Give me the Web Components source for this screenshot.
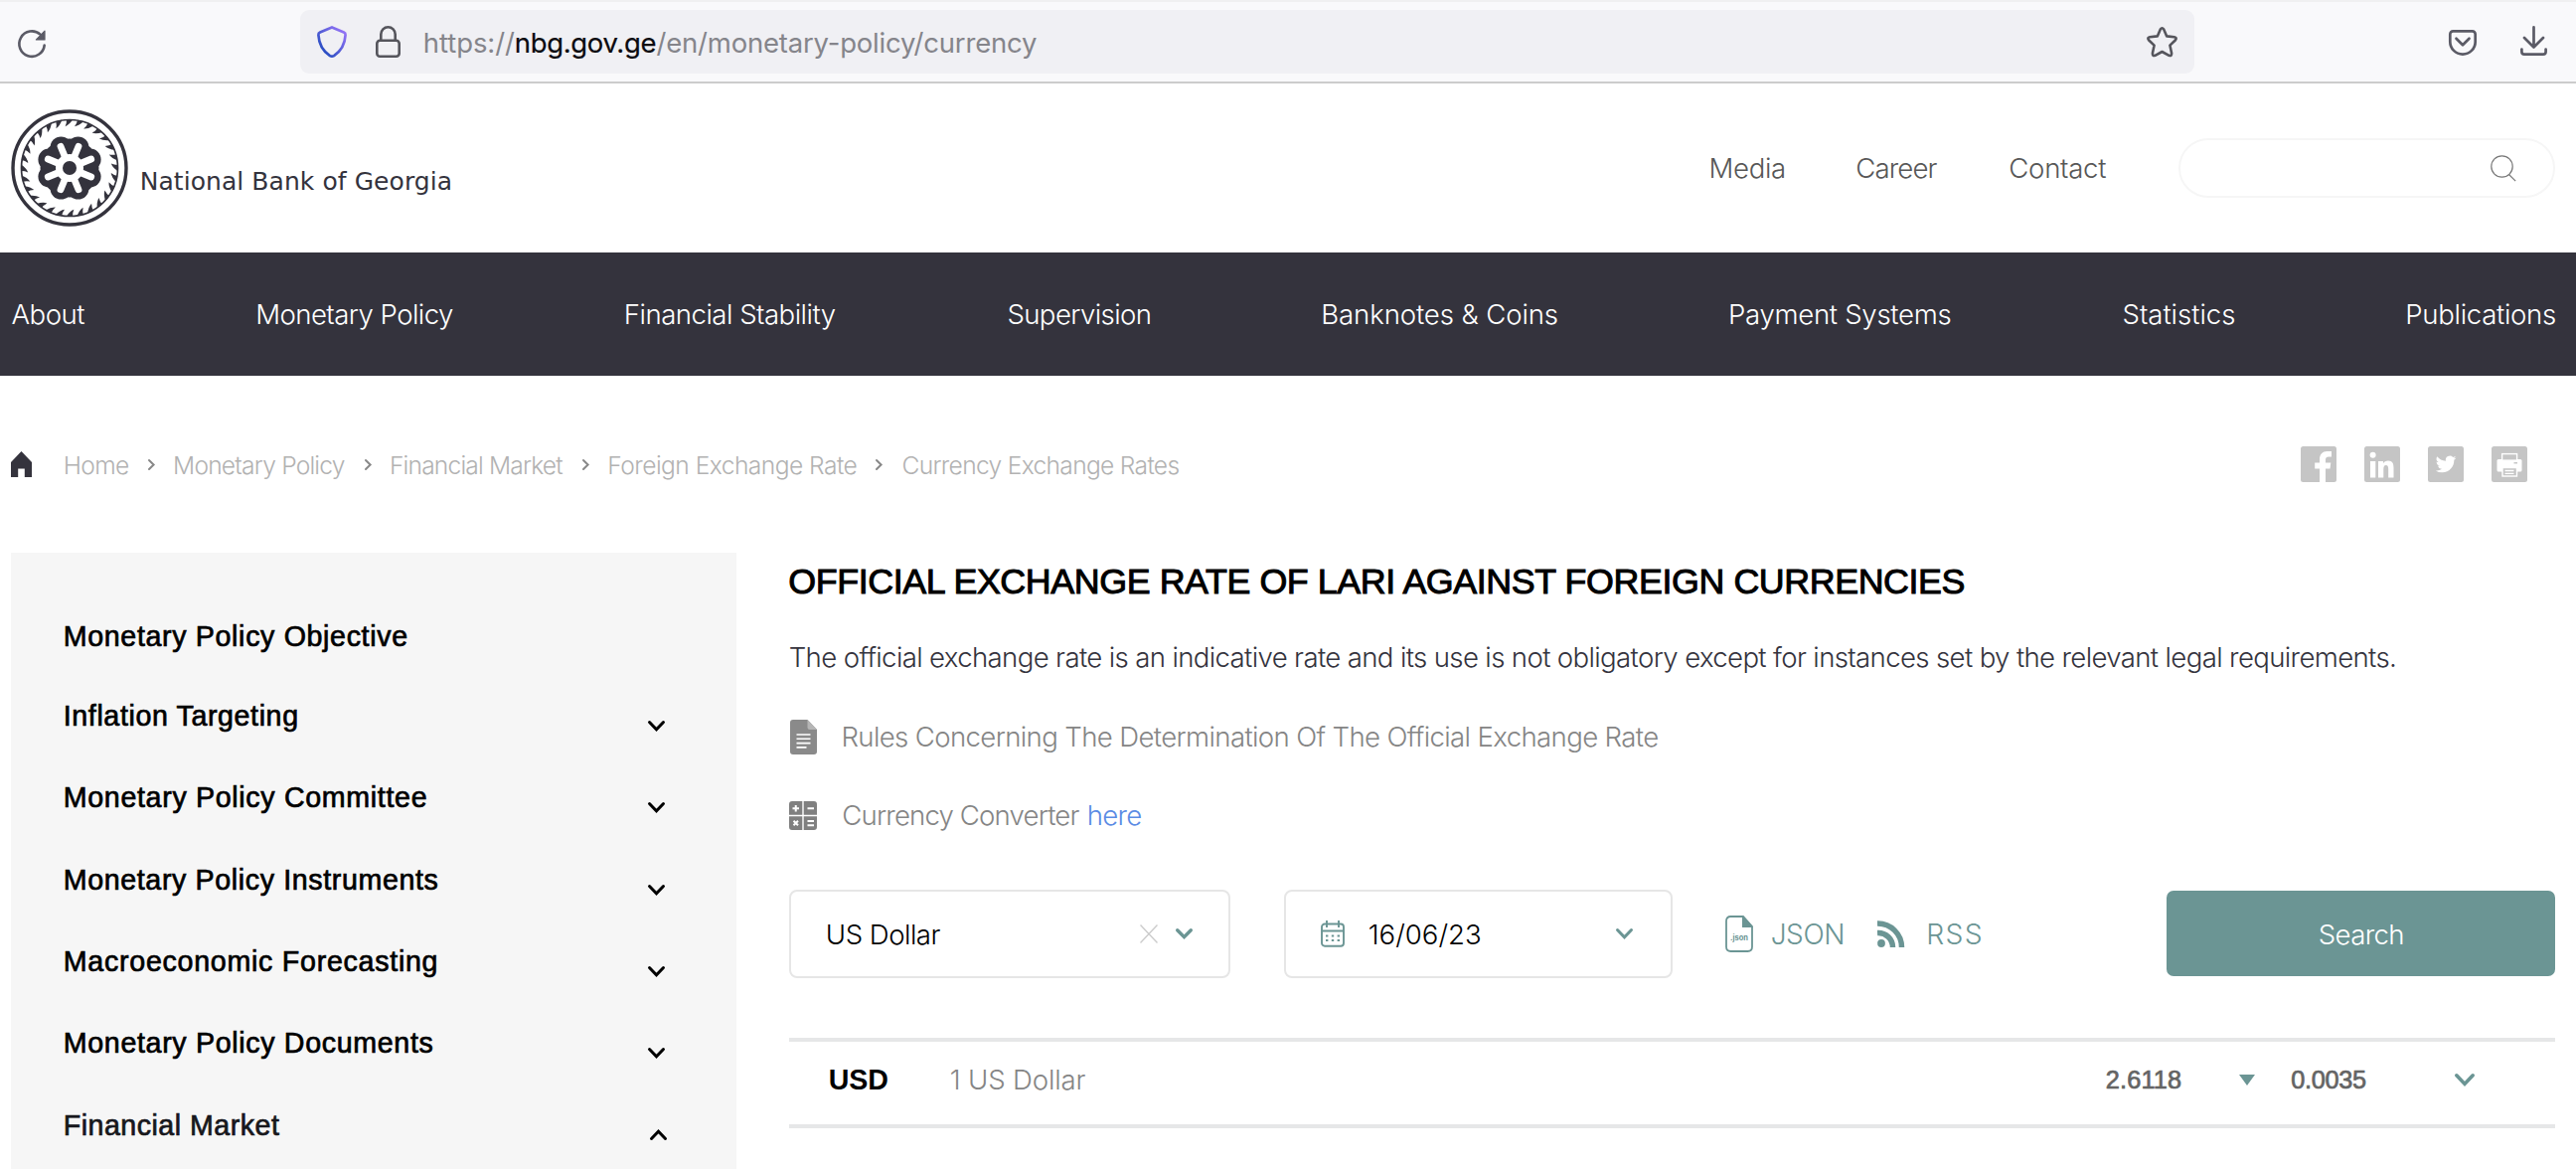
<!DOCTYPE html>
<html lang="en">
<head>
<meta charset="utf-8">
<title>National Bank of Georgia</title>
<style>
html,body{margin:0;padding:0;width:2592px;height:1176px;overflow:hidden;background:#fff;font-family:Inter,"Liberation Sans",sans-serif}
</style>
</head>
<body>
<nbg-page></nbg-page>
<script>
const make = (name, html, setup) => {
  const t = document.createElement('template');
  t.innerHTML = html;
  customElements.define(name, class extends HTMLElement {
    connectedCallback() {
      if (this.shadowRoot) return;
      this.attachShadow({ mode: 'open' }).appendChild(t.content.cloneNode(true));
      if (setup) setup(this, this.shadowRoot);
    }
  });
};

/* One line of text whose tracking is set so that its ink spans w pixels. */
make('fit-text', `<style>
:host{display:block;flex:none;white-space:pre;line-height:40px;font-weight:300;font-size:27.6px}
:host([medium]){font-family:"Liberation Sans",sans-serif;font-weight:400;font-size:28.6px;-webkit-text-stroke:.7px currentColor}
:host([heavy]){font-family:"Liberation Sans",sans-serif;font-weight:700;font-size:28.6px}
span{display:inline-block;white-space:pre}
</style><span><slot></slot></span>`, (el, root) => {
  const w = +el.getAttribute('w');
  if (el.hasAttribute('size')) el.style.fontSize = el.getAttribute('size') + 'px';
  if (el.hasAttribute('weight')) el.style.fontWeight = el.getAttribute('weight');
  if (el.hasAttribute('color')) el.style.color = el.getAttribute('color');
  const cs = getComputedStyle(el), text = el.textContent;
  const ctx = document.createElement('canvas').getContext('2d');
  const k = 16; /* measured enlarged, as glyph bounds are rounded to whole pixels */
  ctx.font = `${cs.fontWeight} ${parseFloat(cs.fontSize) * k}px ${cs.fontFamily}`;
  const m = ctx.measureText(text);
  const ink = (m.actualBoundingBoxRight + m.actualBoundingBoxLeft) / k;
  el.style.width = w + 'px';
  el.style.letterSpacing = (w - 1 - ink) / (text.length - 1) + 'px';
  root.querySelector('span').style.marginLeft = m.actualBoundingBoxLeft / k + 1 + 'px';
});

/* Chevron: dir = down | up | right */
make('chev-icon', `<style>:host{display:block;flex:none}svg{display:block;overflow:visible}</style>
<svg fill="none" stroke="currentColor" stroke-linecap="round" stroke-linejoin="miter"><path/></svg>`, (el, root) => {
  const w = +el.getAttribute('w'), h = +el.getAttribute('h'), s = +(el.getAttribute('s') || 3), i = s / 2;
  const svg = root.querySelector('svg');
  svg.setAttribute('width', w); svg.setAttribute('height', h); svg.setAttribute('stroke-width', s);
  const d = { down: `M${i} ${i}L${w/2} ${h-i*1.4}L${w-i} ${i}`, up: `M${i} ${h-i}L${w/2} ${i*1.4}L${w-i} ${h-i}`, right: `M${i} ${i}L${w-i*1.4} ${h/2}L${i} ${h-i}` };
  root.querySelector('path').setAttribute('d', d[el.getAttribute('dir') || 'down']);
});

make('browser-bar', `<style>
:host{display:flex;box-sizing:border-box;height:84px;align-items:center;background:#f9f9fb;border-top:2px solid #f0f0f1;border-bottom:2px solid #ccc;padding:0 29px 0 18px;color:#5b5b66}
svg{display:block;flex:none;overflow:visible}
fit-text{padding-top:2px}
.url{display:flex;align-items:center;box-sizing:border-box;width:1906px;height:64px;margin-left:256px;border-radius:9px;background:#f0f0f4;padding:0 17px 0 17px}
.grow{flex:1}
</style>
<svg width="28" height="28" viewBox="0 0 28 28" fill="none" stroke="currentColor" stroke-width="2.6" style="margin-top:4px"><path d="M26.7 15.5A12.7 12.7 0 1 1 22.5 4.6" stroke-linecap="round"/><path d="M27 1.2V10h-8.6z" fill="currentColor" stroke-width="1.2" stroke-linejoin="round"/></svg>
<div class="url">
<svg width="30" height="32" viewBox="0 0 30 32" fill="none"><defs><linearGradient id="g" x1="0" y1="1" x2="1" y2="0"><stop offset=".2" stop-color="#2d4fc4"/><stop offset=".9" stop-color="#9273f5"/></linearGradient></defs><path d="M15 1.4L27 6.6c1.2.5 1.7 1.3 1.6 2.6C28 19 23.500 26 17 30.100c-1.500.8-2.500.8-4 0C6.500 26 2 19 1.400 9.200 1.300 7.900 1.800 7.100 3 6.600z" stroke="url(#g)" stroke-width="2.7" stroke-linejoin="round"/></svg>
<svg width="25" height="32" viewBox="0 0 25 32" fill="none" stroke="#55555c" stroke-width="2.6" style="margin-left:29px"><rect x="1.300" y="14.800" width="22.400" height="15.900" rx="3"/><path d="M5.300 14.800V8.500a7.200 7.200 0 0 1 14.400 0v6.300"/></svg>
<fit-text w="91" size="27.5" weight="400" color="#85858b" style="margin-left:23.500px">https://</fit-text>
<fit-text w="141" size="27.500" weight="400" color="#0c0b10" style="margin-left:1px;-webkit-text-stroke:.2px">nbg.gov.ge</fit-text>
<fit-text w="383" size="27.500" weight="400" color="#85858b" style="margin-left:.500px">/en/monetary-policy/currency</fit-text>
<div class="grow"></div>
<svg width="31" height="31" viewBox="0 0 31 31" fill="none" stroke="#55555c" stroke-width="2.600" stroke-linejoin="round"><path d="M13.800 2.500q1.700-2.600 3.400 0L20.200 9.400l7.600.8q3 .7 1.200 3L23.400 18.600l1.700 8q.2 3-2.600 2.200L15.500 25 8.500 28.800q-2.800.8-2.600-2.200l1.700-8L2 13.200q-1.800-2.300 1.200-3l7.600-.8z"/></svg>
</div>
<div class="grow"></div>
<svg width="28" height="26" viewBox="0 0 28 26" fill="none" stroke="currentColor" stroke-width="2.700" stroke-linecap="round" stroke-linejoin="round" style="margin-top:2px"><path d="M4.300 1.400h19.400a3 3 0 0 1 3 3v7.500a12.700 12.700 0 0 1-25.400 0V4.400a3 3 0 0 1 3-3z"/><path d="M7.500 8.800l6.500 6.500 6.500-6.500"/></svg>
<svg width="27" height="30" viewBox="0 0 27 30" fill="none" stroke="currentColor" stroke-width="2.700" stroke-linecap="round" stroke-linejoin="round" style="margin-left:44px;margin-top:-2px"><path d="M13.500 1.400v19M4 12l9.500 9.500L23 12M1.400 23.500V26q0 2.600 2.600 2.600h19q2.600 0 2.600-2.600v-2.500"/></svg>`);

make('nbg-seal', `<style>:host{display:block;flex:none}svg{display:block}</style>
<svg width="118" height="118" viewBox="-59 -59 118 118" fill="#34333d"><circle r="57" fill="none" stroke="#34333d" stroke-width="3.400"/><circle r="48.500" fill="none" stroke="#34333d" stroke-width="1.700"/><g id="teeth"></g><circle r="29.500"/><g id="lobes"></g><circle r="14" fill="#fff"/><g id="petals" stroke="#fff" stroke-width="6.800" stroke-linecap="round"></g><circle r="7"/></svg>`, (el, root) => {
  const p = (r, a) => { a *= Math.PI / 180; return (r * Math.cos(a)).toFixed(2) + ' ' + (r * Math.sin(a)).toFixed(2); };
  let t = '', l = '', s = '';
  for (let i = 0; i < 28; i++) { const a = i * 360 / 28; t += `<path d="M${p(49, a - 3.500)}Q${p(45.500, a - 3.500)} ${p(42, a - 6)}Q${p(43.500, a)} ${p(49, a + 4)}z"/>`; }
  for (let i = 0; i < 8; i++) {
    const a = 22.5 + i * 45, c = p(22.5, a).split(' '), e = p(23.5, a).split(' ');
    l += `<circle cx="${c[0]}" cy="${c[1]}" r="10.800"/>`;
    s += `<path d="M0 0L${e[0]} ${e[1]}"/>`;
  }
  root.querySelector('#teeth').innerHTML = t;
  root.querySelector('#lobes').innerHTML = l;
  root.querySelector('#petals').innerHTML = s;
});

make('site-header', `<style>
:host{display:flex;height:170px;align-items:center;padding:0 21px 0 11px;box-sizing:border-box;color:#575757}
.name{font-family:"DejaVu Sans",sans-serif;font-weight:400;margin:27px 0 0 13px}
.sp{flex:1}
nav{display:flex;gap:73px;margin-right:73px}
.box{display:flex;align-items:center;justify-content:flex-end;box-sizing:border-box;width:379px;height:60px;border:2px solid #f6f6f6;border-radius:30px;padding-right:37px}
</style>
<nbg-seal></nbg-seal><fit-text class="name" w="311" size="25" weight="400" color="#34333d">National Bank of Georgia</fit-text>
<div class="sp"></div>
<nav><fit-text w="74">Media</fit-text><fit-text w="81">Career</fit-text><fit-text w="97">Contact</fit-text></nav>
<div class="box"><svg width="26" height="27" viewBox="0 0 26 27" fill="none" stroke="#777" stroke-width="1.200"><circle cx="11.500" cy="11.500" r="10.700"/><path d="M18.500 19.500l6.700 6.700"/></svg></div>`);

make('main-nav', `<style>:host{display:flex;justify-content:space-between;align-items:center;box-sizing:border-box;height:124px;padding:0 21px 0 11px;background:#34333d;color:#fff}</style>
<fit-text w="74">About</fit-text><fit-text w="197">Monetary Policy</fit-text><fit-text w="211">Financial Stability</fit-text><fit-text w="143">Supervision</fit-text><fit-text w="236">Banknotes &amp; Coins</fit-text><fit-text w="222">Payment Systems</fit-text><fit-text w="112">Statistics</fit-text><fit-text w="149">Publications</fit-text>`);

make('crumb-bar', `<style>
:host{display:flex;align-items:center;height:36px;padding:71px 49px 71px 11px;color:#b2b2b2}
svg{display:block}
.trail{display:flex;align-items:center;gap:19.700px;margin-left:33px;padding-top:2px}
chev-icon{color:#888;margin-top:-2px}
.social{display:flex;gap:28px;margin-left:auto}
</style>
<svg width="21" height="26" viewBox="0 0 21 26" fill="#34333d"><path d="M10.500 0L21 11v15h-7.200v-8.500H7.200V26H0V11z"/></svg>
<div class="trail"><fit-text w="64" size="24.600">Home</fit-text><chev-icon dir="right" w="7" h="11" s="2"></chev-icon><fit-text w="171.500" size="24.600">Monetary Policy</fit-text><chev-icon dir="right" w="7" h="11" s="2"></chev-icon><fit-text w="173" size="24.600">Financial Market</fit-text><chev-icon dir="right" w="7" h="11" s="2"></chev-icon><fit-text w="249" size="24.600">Foreign Exchange Rate</fit-text><chev-icon dir="right" w="7" h="11" s="2"></chev-icon><fit-text w="278" size="24.600">Currency Exchange Rates</fit-text></div>
<div class="social">
<svg width="36" height="36" viewBox="0 0 36 36"><rect width="36" height="36" rx="2.500" fill="#c5c5c5"/><path fill="#fff" d="M19 36V22.500h-4.800v-6H19V13c0-5 3-8 7.500-8H31v5.500h-3c-2 0-3 1-3 3v3h5.300l-.8 6H25V36z"/></svg>
<svg width="36" height="36" viewBox="0 0 36 36"><rect width="36" height="36" rx="2.500" fill="#c5c5c5"/><g fill="#fff"><circle cx="8.600" cy="8.700" r="3"/><path d="M6 15h5.300v16.500H6zM14 15h5v2.300c1-1.700 2.700-2.700 5-2.700 4.500 0 5.500 3 5.500 7.200v9.700h-5.300v-8.600c0-2.200-.4-4-2.400-4s-2.500 1.700-2.500 4v8.600H14z"/></g></svg>
<svg width="36" height="36" viewBox="0 0 36 36"><rect width="36" height="36" rx="2.500" fill="#c5c5c5"/><path fill="#fff" transform="translate(7.800 7.600) scale(.86)" d="M24 4.560a9.800 9.800 0 0 1-2.830.78 4.900 4.900 0 0 0 2.160-2.730 9.900 9.900 0 0 1-3.130 1.200 4.920 4.920 0 0 0-8.380 4.480A13.960 13.960 0 0 1 1.670 3.150a4.920 4.920 0 0 0 1.520 6.570 4.900 4.900 0 0 1-2.230-.61v.06a4.920 4.920 0 0 0 3.950 4.830 4.900 4.900 0 0 1-2.220.08 4.930 4.930 0 0 0 4.600 3.420A9.870 9.870 0 0 1 0 19.540a13.940 13.940 0 0 0 7.550 2.210c9.050 0 14-7.500 14-13.980l-.02-.64A10 10 0 0 0 24 4.560z"/></svg>
<svg width="36" height="36" viewBox="0 0 36 36"><rect width="36" height="36" rx="2.500" fill="#c5c5c5"/><path fill="#fff" d="M7 13h22q1.500 0 1.500 1.500V24q0 1.500-1.500 1.500H7Q5.500 25.500 5.500 24v-9.500Q5.500 13 7 13z"/><rect x="10.600" y="7.600" width="15" height="6.500" fill="#c5c5c5" stroke="#fff" stroke-width="1.400"/><rect x="11" y="21.500" width="14.500" height="8.500" fill="#c5c5c5" stroke="#fff" stroke-width="1.400"/><path stroke="#fff" stroke-width="1.300" d="M13.500 24.500h9M13.500 27.300h9"/><path stroke="#c5c5c5" stroke-width="1.500" d="M22.500 16.700h3.500"/></svg>
</div>`);

make('side-item', `<style>
:host{display:flex;justify-content:space-between;align-items:center;height:82.300px;padding:0 72px 0 54px;color:#000}
:host([first]){height:80px;margin-bottom:-1px}
:host([open]){color:#17171c;padding-right:70px}
chev-icon{margin-top:21px;color:#000}
:host([open]) chev-icon{margin-top:19px}
</style><slot></slot>`, (el, root) => {
  if (!el.hasAttribute('first')) {
    const c = document.createElement('chev-icon');
    for (const [k, v] of Object.entries({ w: 17, h: 11, s: 3, dir: el.hasAttribute('open') ? 'up' : 'down' })) c.setAttribute(k, v);
    root.appendChild(c);
  }
});

make('side-menu', `<style>:host{display:block;box-sizing:border-box;width:730px;height:620px;padding-top:44px;background:#f6f6f6;overflow:hidden}</style>
<side-item first><fit-text medium w="344">Monetary Policy Objective</fit-text></side-item>
<side-item><fit-text medium w="234">Inflation Targeting</fit-text></side-item>
<side-item><fit-text medium w="363.500">Monetary Policy Committee</fit-text></side-item>
<side-item><fit-text medium w="375">Monetary Policy Instruments</fit-text></side-item>
<side-item><fit-text medium w="374">Macroeconomic Forecasting</fit-text></side-item>
<side-item><fit-text medium w="370">Monetary Policy Documents</fit-text></side-item>
<side-item open><fit-text medium w="216">Financial Market</fit-text></side-item>`);

make('filter-row', `<style>
:host{display:flex;align-items:center;height:89px;margin-top:55px;color:#6b9594}
svg{display:block;flex:none}
.f{display:flex;align-items:center;box-sizing:border-box;height:89px;border:2px solid #e6e6e6;border-radius:8px}
.sel{width:444px;padding:0 36px}.date{width:391px;margin-left:54px;padding:0 38px 0 35px}
.sp{flex:1}
.btn{display:flex;align-items:center;justify-content:center;width:391px;height:86px;border-radius:7px;background:#6b9594;color:#fff;margin-top:-1px}
.btn fit-text{padding-top:1px}
</style>
<div class="f sel"><fit-text w="114" color="#000">US Dollar</fit-text><div class="sp"></div><svg width="18" height="19" stroke="#ccc" stroke-width="1.400"><path d="M.5.5l17 18M17.500.5l-17 18"/></svg><chev-icon w="17" h="11" s="3.400" style="margin-left:18px"></chev-icon></div>
<div class="f date"><svg width="24" height="27" viewBox="0 0 24 27" fill="none" stroke="currentColor" stroke-width="1.900"><rect x="1" y="3.500" width="22" height="22.300" rx="3"/><path d="M1 10.500h22M6 0v7M18 0v7"/><path d="M5 15.500h2.400m3.400 0h2.400m3.400 0H19M5 20h2.400m3.400 0h2.400m3.400 0H19" stroke-width="2.200"/></svg><fit-text w="112" color="#000" style="margin-left:24px">16/06/23</fit-text><div class="sp"></div><chev-icon w="17" h="11" s="3"></chev-icon></div>
<svg width="28" height="37" viewBox="0 0 28 37" style="margin-left:53px"><path d="M5.500 1H18l9 10v20.500q0 4.500-4.500 4.500h-17Q1 36 1 31.500v-26Q1 1 5.500 1z" fill="none" stroke="currentColor" stroke-width="1.800"/><path d="M17 1h1.500l9 10v1H17z" fill="currentColor"/><text x="14" y="24.500" text-anchor="middle" font-family="Inter" font-weight="700" font-size="7.500" textLength="18" fill="currentColor">.json</text></svg>
<fit-text w="72" size="28" style="margin-left:18px">JSON</fit-text>
<svg width="28" height="27" viewBox="0 0 28 27" fill="none" stroke="currentColor" stroke-width="5.500" style="margin-left:35px"><circle cx="4" cy="23" r="3.900" fill="currentColor" stroke="none"/><path d="M0 12.500A14.500 14.500 0 0 1 15.500 27M0 3A24 24 0 0 1 24.500 27"/></svg>
<fit-text w="53" size="28.300" style="margin-left:23px">RSS</fit-text>
<div class="sp"></div>
<div class="btn"><fit-text w="84">Search</fit-text></div>`);

make('rate-row', `<style>
:host{display:flex;align-items:center;box-sizing:border-box;height:91px;margin-top:60px;border-top:4px solid #e6e7e8;border-bottom:4px solid #e6e7e8;padding:0 81px 7px 40px;color:#646464}
.sp{flex:1}svg{display:block}
</style>
<fit-text heavy w="59" color="#000">USD</fit-text>
<fit-text w="136" color="#858585" style="margin-left:63px">1 US Dollar</fit-text>
<div class="sp"></div>
<fit-text medium w="75" size="25.300">2.6118</fit-text>
<svg width="16" height="11" style="margin-left:59px"><path d="M0 0h16L8 11z" fill="#6b9594"/></svg>
<fit-text medium w="75" size="25.300" style="margin-left:36px">0.0035</fit-text>
<chev-icon w="20" h="13" s="3.600" style="margin-left:90px;color:#6b9594"></chev-icon>`);

make('rate-panel', `<style>
:host{display:block;width:1777px;padding-top:3px}
.line{display:flex;align-items:center;height:40px}
svg{display:block;flex:none}
.t{height:50px}
.t fit-text{padding-top:2px;-webkit-text-stroke-width:1px}
</style>
<div class="line t"><fit-text medium w="1186" size="35.800" color="#000">OFFICIAL EXCHANGE RATE OF LARI AGAINST FOREIGN CURRENCIES</fit-text></div>
<div class="line" style="margin-top:32px"><fit-text w="1616" color="#34333d">The official exchange rate is an indicative rate and its use is not obligatory except for instances set by the relevant legal requirements.</fit-text></div>
<div class="line" style="margin-top:40px"><svg width="28" height="35" viewBox="0 0 28 35"><path fill="#8a8a8a" d="M4 0h14.500L28 10v22q0 3-3 3H4q-3 0-3-3V3q0-3 3-3z"/><path fill="#b5b5b5" d="M18.500 0L28 10h-7q-2.500 0-2.500-2.500z"/><path stroke="#fff" stroke-width="1.600" d="M7.500 15h14M7.500 19.300h14M7.500 23.600h14M7.500 27.900h10"/></svg><fit-text w="820" color="#858585" style="margin-left:26px">Rules Concerning The Determination Of The Official Exchange Rate</fit-text></div>
<div class="line" style="margin-top:39px"><svg width="28" height="29" viewBox="0 0 28 29"><path fill="#808080" d="M3 0h10.300v13.700H0V3q0-3 3-3zM14.700 0H25q3 0 3 3v10.700H14.700zM0 15.200h13.300V29H3q-3 0-3-3zM14.700 15.200H28V26q0 3-3 3H14.700z"/><path stroke="#fff" stroke-width="2" d="M3.500 7.300h6.500M6.750 4v6.600M18.500 7.300H25M4.500 19.700l4.500 4.500M9 19.700l-4.500 4.500M18.500 20H25M18.500 24.300H25"/></svg><fit-text w="238" color="#858585" style="margin-left:26px">Currency Converter</fit-text><fit-text w="53" color="#5a8be4" style="margin-left:9px">here</fit-text></div>
<filter-row></filter-row>
<rate-row></rate-row>`);

make('nbg-page', `<style>
:host{display:flex;flex-direction:column;width:2592px;height:1176px;overflow:hidden;background:#fff}
main{display:flex;gap:53px;padding-left:11px}
</style>
<browser-bar></browser-bar><site-header></site-header><main-nav></main-nav><crumb-bar></crumb-bar>
<main><side-menu></side-menu><rate-panel></rate-panel></main>`);
</script>
</body>
</html>
